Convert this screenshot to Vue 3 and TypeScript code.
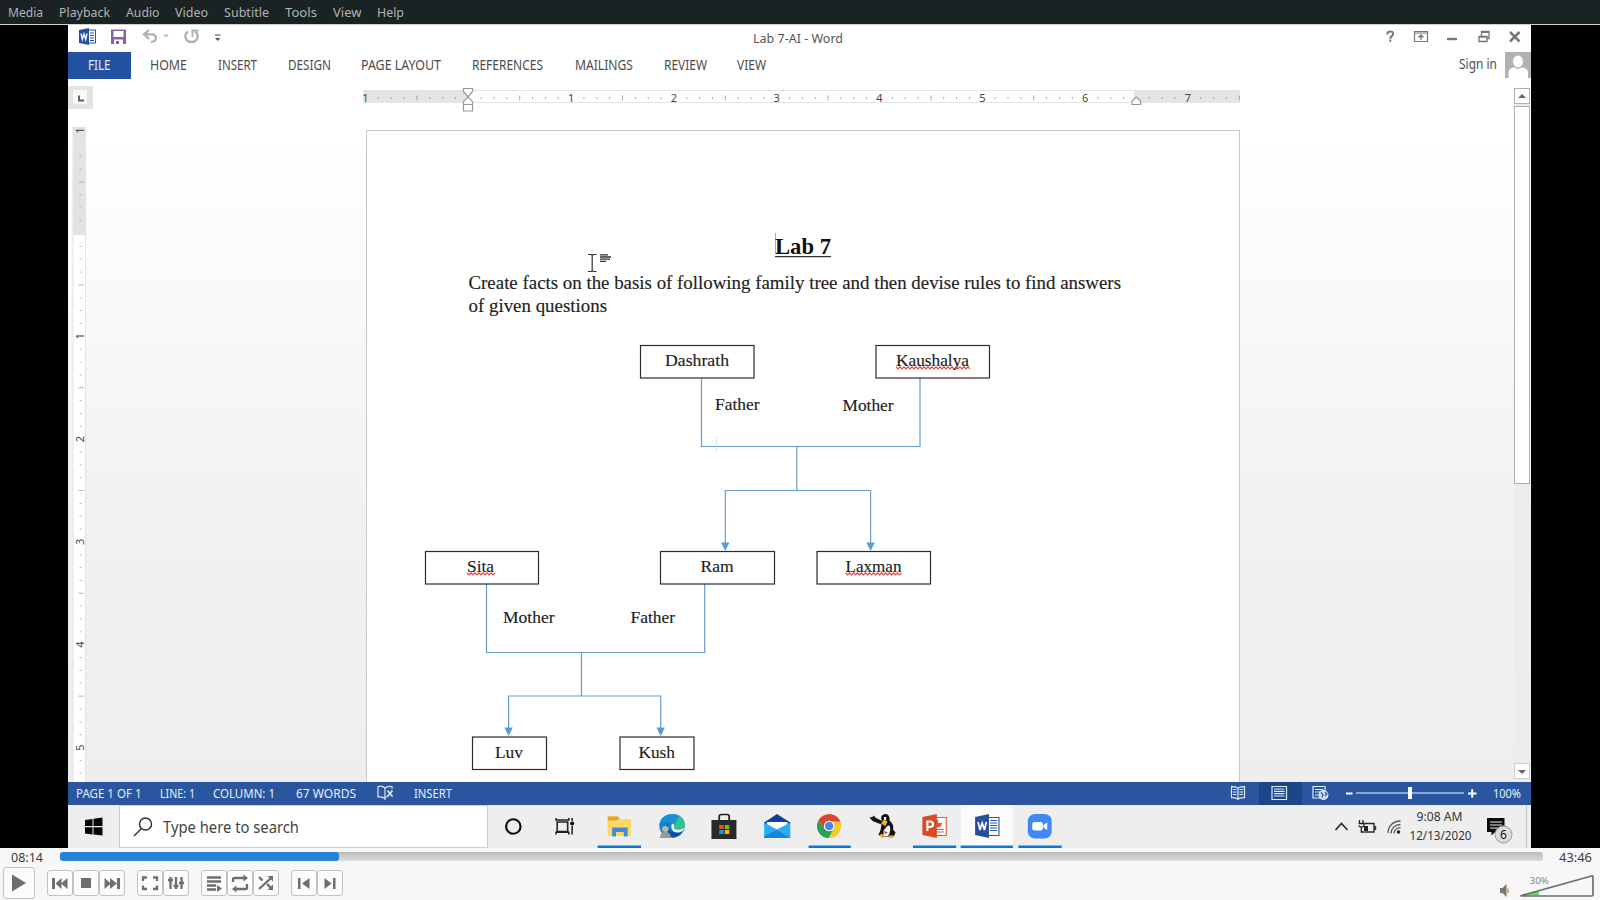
<script setup lang="ts">
import { h, type FunctionalComponent } from 'vue'

interface Label { t: string; w: number; gap: number }

// A line of text fitted to a fixed width, baseline 15px below its top.
const Fit: FunctionalComponent<{ t: string; w: number }> = (props) =>
  h('svg', { width: props.w, height: 20, class: 'fit' }, [
    h('text', { x: 0, y: 15, textLength: props.w, lengthAdjust: 'spacingAndGlyphs', fill: 'currentColor' }, props.t),
  ])
Fit.props = ['t', 'w']

const menus: Label[] = [
  { t: 'Media', w: 35, gap: 8 }, { t: 'Playback', w: 51, gap: 16 }, { t: 'Audio', w: 33.5, gap: 16 },
  { t: 'Video', w: 33, gap: 15.5 }, { t: 'Subtitle', w: 45, gap: 16 }, { t: 'Tools', w: 32, gap: 16 },
  { t: 'View', w: 28.5, gap: 15.5 }, { t: 'Help', w: 27, gap: 16 },
]
const tabs: Label[] = [
  { t: 'HOME', w: 37, gap: 18.5 }, { t: 'INSERT', w: 39, gap: 31 }, { t: 'DESIGN', w: 43, gap: 31 },
  { t: 'PAGE LAYOUT', w: 80, gap: 30.5 }, { t: 'REFERENCES', w: 71, gap: 31 }, { t: 'MAILINGS', w: 58, gap: 31.5 },
  { t: 'REVIEW', w: 43, gap: 31 }, { t: 'VIEW', w: 29, gap: 30.5 },
]
const status: Label[] = [
  { t: 'PAGE 1 OF 1', w: 65.5, gap: 7.5 }, { t: 'LINE: 1', w: 35, gap: 18.5 },
  { t: 'COLUMN: 1', w: 62, gap: 18.5 }, { t: '67 WORDS', w: 60, gap: 21 },
]

const inch = 102.8
const hTicks: { x: number; half: boolean }[] = []
for (let i = -7; i <= 60; i++) {
  if (i % 8 !== 0 && i !== 52) hTicks.push({ x: 468.3 + (i * inch) / 8, half: Math.abs(i % 8) === 4 })
}
const hNumbers = [-1, 1, 2, 3, 4, 5, 6, 7].map((n) => ({ n: Math.abs(n), x: 468.3 + n * inch }))
const vTicks: { y: number; half: boolean }[] = []
for (let i = -6; i <= 42; i++) {
  if (i % 8 !== 0) vTicks.push({ y: 233.5 + (i * inch) / 8, half: Math.abs(i % 8) === 4 })
}
const vNumbers = [-1, 1, 2, 3, 4, 5].map((n) => ({ n: Math.abs(n), y: 233.5 + n * inch }))

const people = [
  { t: 'Dashrath', x: 640.5, y: 345.5, w: 113.5, tx: 665, tw: 64 },
  { t: 'Kaushalya', x: 876, y: 345.5, w: 113.5, tx: 896, tw: 73, bad: true },
  { t: 'Sita', x: 425.5, y: 551.5, w: 113, tx: 467, tw: 27, bad: true },
  { t: 'Ram', x: 660.5, y: 551.5, w: 114, tx: 700.5, tw: 33 },
  { t: 'Laxman', x: 817, y: 551.5, w: 113.5, tx: 845.5, tw: 56, bad: true },
  { t: 'Luv', x: 472.5, y: 737, w: 74, tx: 495, tw: 28 },
  { t: 'Kush', x: 620, y: 737, w: 74, tx: 638.5, tw: 36.5 },
]
const roles = [
  { t: 'Father', x: 715, y: 410, w: 44.5 }, { t: 'Mother', x: 842.5, y: 411, w: 51 },
  { t: 'Mother', x: 503, y: 623, w: 51.5 }, { t: 'Father', x: 630.5, y: 623, w: 44.5 },
]
const squiggle = (x: number, y: number, w: number): string => {
  let d = `M${x} ${y}`
  for (let i = 1; i * 2 <= w; i++) d += `L${x + i * 2} ${y + (i % 2 ? 2 : 0)}`
  return d
}
const arrows = [{ x: 725.3, y: 551 }, { x: 870.6, y: 551 }, { x: 508.6, y: 736 }, { x: 660.7, y: 736 }]

// Control groups: filled and stroked outlines on a 26px grid.
const groups: { f?: string; s?: string }[][] = [
  [
    { f: 'M5 8h3v11H5zM8.500 13.500l6-5.500v11zM14 13.500L20.500 8v11z' },
    { f: 'M8 8h10v10H8z' },
    { f: 'M5.500 8v11l6.500-5.500zM11 8v11l7-5.500zM18 8h3v11h-3z' },
  ],
  [
    { s: 'M6 11V7.500h4M16 7.500h4V11M20 15.500V19h-4M10 19H6v-3.500' },
    { s: 'M7.500 7v12M13 7v12M18.500 7v12M5 10h5M10.500 16h5M16 13h5' },
  ],
  [
    { s: 'M6 7.500h14M6 11.500h14M6 15.500h9M6 19.500h9', f: 'M16 15v7l5-3.500z' },
    { s: 'M6 12V9.500c0-1 .5-1.500 1.500-1.500H18M20 14v3.500c0 1-.5 1.500-1.500 1.500H8', f: 'M16.500 4.500l4.500 3.500-4.500 3.500zM9.500 15.500L5 19l4.500 3.500z' },
    { s: 'M6 7l3.500 3.500M6 19L18 8M14 14l4 4', f: 'M14.500 6h5.500v5.500zM14.500 20H20v-5.500z' },
  ],
  [
    { f: 'M7 8h2.500v11H7zM18.500 8v11l-7.500-5.500z' },
    { f: 'M7.500 8v11l7-5.500zM16 8h2.500v11H16z' },
  ],
]
</script>

<template>
  <div class="player">
    <nav class="menubar">
      <Fit v-for="m in menus" :key="m.t" :t="m.t" :w="m.w" :style="{ marginLeft: m.gap + 'px' }" />
    </nav>

    <main class="video">
      <div class="desktop">
        <header class="titlebar">
          <svg width="150" height="27" viewBox="77 25 150 27">
            <rect x="87" y="30" width="8.500" height="13" fill="#fff" stroke="#2b579a" />
            <path d="M90 33h4M90 35.500h4M90 38h4M90 40.500h4" stroke="#2b579a" />
            <path d="M79 30l10-2v17l-10-2z" fill="#2750a5" />
            <path d="M81 33.500l1.300 6 1.700-5.500 1.700 5.500 1.300-6" fill="none" stroke="#fff" stroke-width="1.300" />
            <path d="M111 29.500h15v14.500h-15z" fill="#8561ad" />
            <path d="M113.500 31h10v6h-10zM114 39.500h9v4.500h-9z" fill="#fff" /><path d="M116 41h3v3h-3z" fill="#8561ad" />
            <path d="M149 30l-5 4.300 5 4.500M144.500 34.300h7c6 0 6 7.500-.5 7.500" fill="none" stroke="#b1b1b1" stroke-width="2.300" />
            <path d="M163 34.500h6l-3 3z" fill="#b9b9b9" />
            <path d="M188 31.500c-4.500 3-3 10.500 3.500 10.500 6.500 0 8-7.500 3.500-10.500" fill="none" stroke="#b1b1b1" stroke-width="2.300" />
            <path d="M192.500 37v-6.500h6" fill="none" stroke="#b1b1b1" stroke-width="2" />
            <path d="M215 35h5.500" stroke="#666" stroke-width="1.200" /><path d="M215 38h5.500l-2.750 3z" fill="#555" />
          </svg>
          <Fit class="doc-name" t="Lab 7-AI - Word" :w="90" />
          <svg class="window-buttons" width="141" height="27" viewBox="1383 25 141 27" fill="none" stroke="#777">
            <path d="M1387.200 34.500c0-4 6-4 6-.8 0 2.600-2.900 2.300-2.900 5M1390.300 39.600v2.200" stroke-width="2" />
            <path d="M1414.500 31.500h13v10h-13zM1414 33h14" stroke-width="1.200" /><path d="M1421 40v-5M1418.500 37.500l2.500-2.500 2.500 2.500" stroke-width="1.300" />
            <path d="M1447 39h10" stroke-width="2.400" />
            <path d="M1479 36.500h8v5h-8zM1481.500 36v-4.500h7.500v7h-2M1479 37h8M1481 32.300h8" stroke-width="1.300" />
            <path d="M1510 32l9.500 9.500M1519.500 32l-9.500 9.500" stroke-width="2.500" />
          </svg>
        </header>

        <div class="tabs">
          <div class="file"><Fit t="FILE" :w="22.5" /></div>
          <Fit v-for="t in tabs" :key="t.t" :t="t.t" :w="t.w" :style="{ marginLeft: t.gap + 'px' }" />
          <Fit class="signin" t="Sign in" :w="38" />
          <svg class="avatar" width="26" height="26">
            <rect width="26" height="26" fill="#b1b1b1" />
            <ellipse cx="13" cy="9.500" rx="5" ry="6" fill="#fff" /><path d="M3.500 26v-5c0-4 3-5.500 6-5.500 2 1.600 5 1.600 7 0 3 0 6.500 1.500 6.500 5.500v5z" fill="#fff" />
          </svg>
        </div>

        <div class="workspace">
          <div class="sheet-area">
            <svg class="ruler" width="1446" height="51" viewBox="68 79 1446 51">
              <rect x="68" y="86" width="25" height="23" fill="#e4e4e4" />
              <rect x="73" y="90" width="14" height="14" fill="#f9f9f9" /><path d="M79 95.500v5h5" fill="none" stroke="#666" stroke-width="2" />
              <rect x="363" y="90" width="877" height="13" fill="#e4e4e4" /><rect x="468" y="91" width="666" height="11" fill="#fff" />
              <path v-for="k in hTicks" :key="k.x" :d="k.half ? `M${k.x} 95.500v5` : `M${k.x} 97v2`" stroke="#a7a7a7" />
              <text v-for="n in hNumbers" :key="n.x" :x="n.x" y="101.500" text-anchor="middle" class="number">{{ n.n }}</text>
              <g fill="#fff" stroke="#999" stroke-width="1.200">
                <path d="M463.500 88.500h9v3l-4.500 5.500-4.500-5.500z" /><path d="M463.500 104.500v-3l4.500-4.500 4.500 4.500v3zM463.500 104.500h9v6.500h-9z" />
                <path d="M1132 104.500v-3.500l4.300-4 4.300 4v3.500z" />
              </g>
            </svg>
            <div class="page-row">
              <svg class="left-ruler" width="298" height="652" viewBox="68 130 298 652">
                <rect x="72.500" y="127" width="13.500" height="655" fill="#e3e3e3" /><rect x="73.500" y="235" width="11.500" height="547" fill="#fff" />
                <path v-for="k in vTicks" :key="k.y" :d="k.half ? `M78.500 ${k.y}h5` : `M79.500 ${k.y}h2`" stroke="#b3b3b3" />
                <text v-for="n in vNumbers" :key="n.y" class="number" text-anchor="middle" :transform="`translate(84 ${n.y}) rotate(-90)`">{{ n.n }}</text>
              </svg>
              <svg class="page" width="874" height="652" viewBox="366 130 874 652">
                <rect x="366.500" y="130.500" width="873" height="660" fill="#fff" stroke="#c8c8c8" />
                <path d="M775.500 233v20" stroke="#aaa" />
                <text x="775" y="253.500" class="heading" textLength="56" lengthAdjust="spacingAndGlyphs">Lab 7</text>
                <path d="M775 256.700h56" stroke="#333" stroke-width="1.200" />
                <text x="468.500" y="289" class="body" textLength="652.500" lengthAdjust="spacingAndGlyphs">Create facts on the basis of following family tree and then devise rules to find answers</text>
                <text x="468.500" y="311.500" class="body" textLength="138.500" lengthAdjust="spacingAndGlyphs">of given questions</text>
                <path d="M588 254.500h3.200l1 1 1-1h3.300M588 271.500h3.200l1-1 1 1h3.300M592.200 255v16" fill="none" stroke="#333" stroke-width="1.200" />
                <path d="M600 254.800h8M600 257h11M600 259.200h10M600 261.400h6" stroke="#333" stroke-width="1.300" />
                <g fill="none" stroke="#6c9bc9" stroke-width="1.200">
                  <path d="M701.500 378v68.500H920V378M796.800 446.500v44M725.300 545v-54.500h145.300V545" />
                  <path d="M486.500 584v68.500h218.200V584M581.500 652.500V696M508.600 730v-34h152.100v34" />
                </g>
                <path d="M716.500 437v15" stroke="#cfe3f4" />
                <path v-for="a in arrows" :key="a.x" :d="`M${a.x - 4.2} ${a.y - 8.5}h8.400l-4.200 8.500z`" fill="#5b9bd5" />
                <g v-for="p in people" :key="p.t">
                  <rect :x="p.x" :y="p.y" :width="p.w" height="32.500" fill="#fff" stroke="#2c2c2c" stroke-width="1.200" />
                  <text :x="p.tx" :y="p.y + 20.5" class="node" :textLength="p.tw" lengthAdjust="spacingAndGlyphs">{{ p.t }}</text>
                  <path v-if="p.bad" :d="squiggle(p.tx, p.y + 21.3, p.tw + 1)" fill="none" stroke="#e8403c" stroke-width="1.200" />
                </g>
                <text v-for="r in roles" :key="r.x" :x="r.x" :y="r.y" class="node" :textLength="r.w" lengthAdjust="spacingAndGlyphs">{{ r.t }}</text>
              </svg>
            </div>
          </div>
          <svg class="scroll" width="17" height="703" viewBox="1514 79 17 703">
            <rect x="1514" y="104" width="16" height="660" fill="#ececec" />
            <g fill="#fff" stroke="#b0b0b0"><rect x="1514.500" y="88.500" width="15" height="15" /><rect x="1514.500" y="106.500" width="15" height="377" /><rect x="1514.500" y="763.500" width="15" height="15" stroke="#cfcfcf" /></g>
            <path d="M1518 98h8l-4-4zM1518 770h8l-4 4z" fill="#666" />
          </svg>
        </div>

        <footer class="statusbar">
          <Fit v-for="s in status" :key="s.t" :t="s.t" :w="s.w" :style="{ marginLeft: s.gap + 'px' }" />
          <svg class="proof" width="17" height="16" fill="none" stroke="#dce8f5" stroke-width="1.200">
            <path d="M8 3C6 1 3 1 1 1.500V12c3-.5 5 0 7 1.500V3c1.500-1.500 4-2 7-1.500V4M8 13.500V15M8 12.500c1-.5 2-1 3-1" /><path d="M10.500 5.500l5 6M15.500 5.500l-5 6" stroke-width="1.800" />
          </svg>
          <Fit t="INSERT" :w="38" class="insert" />
          <svg class="view-tools" width="305" height="23" viewBox="1226 782 305 23" fill="none" stroke="#e1ebf7" stroke-width="1.200">
            <rect x="1259" y="782" width="43" height="23" fill="#1d4689" stroke="none" />
            <path d="M1238 788c-2-1-4-1.300-6.500-1.300v11c2.500 0 4.500.3 6.500 1.300 2-1 4-1.300 6.500-1.300v-11c-2.500 0-4.500.3-6.500 1.300zv12M1233 789.500h3.500M1233 792h3.500M1233 794.500h3.500M1239.500 789.500h3.500M1239.500 792h3.500M1239.500 794.500h3.500" />
            <path d="M1272 786.500h14.500v13H1272zM1274 789h10.500M1274 791.300h10.500M1274 793.600h10.500M1274 796h10.500" />
            <path d="M1320 798h-7v-11.500h12v4M1315 789.500h8M1315 792h5M1315 795h4" /><circle cx="1323.500" cy="795" r="4.300" fill="#cddff2" /><path d="M1321 792.500l2 2-1 3M1325 792l2 2-2 2" stroke="#2b579a" />
            <path d="M1346 793.500h6.500M1468 793.500h8.500M1472.200 789.300v8.500" stroke-width="2" stroke="#fff" /><path d="M1356 793h108" stroke="#a9c0dd" stroke-width="1.400" />
            <path d="M1408 787h4v12h-4z" fill="#fff" stroke="none" />
            <text class="percent" x="1493" y="797.500" textLength="28" lengthAdjust="spacingAndGlyphs">100%</text>
          </svg>
        </footer>

        <div class="taskbar">
          <svg class="start" width="51" height="43" viewBox="68 805 51 43"><path d="M85 820l7.500-1v7H85zM93.500 818.800l9-1.300v8.500h-9zM85 827.200h7.500v7.300l-7.500-1zM93.500 827.200h9v8.300l-9-1z" fill="#050505" /></svg>
          <div class="search">
            <svg width="20" height="20" fill="none" stroke="#333" stroke-width="1.500"><circle cx="12.500" cy="7" r="6" /><path d="M8.500 11.500L1 19" /></svg>
            <Fit class="hint" t="Type here to search" :w="136" />
          </div>
          <svg class="apps" width="600" height="43" viewBox="489.200 805 540.500 43" preserveAspectRatio="none">
            <ellipse cx="512" cy="826.500" rx="6.500" ry="7.300" fill="none" stroke="#111" stroke-width="2" />
            <g fill="none" stroke="#222" stroke-width="1.400"><path d="M551.500 822h9.500v9.500h-9.500zM550.500 818v2h11.500v-2M550.500 834.500v-2.200h11.500v2.200M565 818v3M565 826v8.500" /></g><circle cx="565" cy="823.500" r="1.900" fill="#111" />
            <rect x="915" y="805" width="47" height="41" fill="#fbfbfb" />
            <path d="M588 845.500h39v2.500h-39zM778 845.500h38v2.500h-38zM872 845.500h39v2.500h-39zM915 845.500h47v2.500h-47zM967 845.500h39v2.500h-39z" fill="#0a78d4" />

            <path d="M597 816.500h9l2 2.500h10v17h-21z" fill="#ffd766" /><path d="M597 816.500h9l2 2-3 2h-8z" fill="#e4a32b" />
            <path d="M601 836.500v-9h14v9h-3.500V832h-7v4.500z" fill="#3a8fd4" />

            <circle cx="655" cy="826" r="11.500" fill="#1684cf" />
            <path d="M643.600 825c1-8 7-11.500 12.500-11 6.500.5 10.500 5 10.500 10 0 4-3 6-7 6-3.500 0-4.500-1-3-2.500 3-5-3-8.500-7.500-6.500-2.500.8-4.500 2-5.500 4z" fill="#35c08d" />
            <path d="M643.600 825c1-8 7-11.500 12.500-11 2 .2 4 1 5.500 2-3 3-1 7-6 8-3-4-8-3-12 1z" fill="#1a8fd6" />
            <path d="M651 823c0 8 6 11.500 13 8.500-1.500 4-5 6-9 6-5-1-7-8-4-14.500z" fill="#0d4fa3" /><path d="M655 823.500c3 1 2 3 1.500 4.500 2 3 7 2 9.500-.5-.5 3-3 5-6 5-4 0-7-4-5-9z" fill="#eef6fa" />
            <circle cx="649" cy="829" r="3" fill="#b5b5b5" /><path d="M644 838c0-4 2-6 5-6s5 2 5 6z" fill="#999" />

            <path d="M697.500 820v-3.500c0-1 .8-2 2-2h5c1.200 0 2 1 2 2v3.500" fill="none" stroke="#222" stroke-width="1.600" /><path d="M690.500 820h22.500v19h-22.500z" fill="#2a2a2a" />
            <path d="M697.500 825h4v4h-4z" fill="#f25022" /><path d="M702.500 825h4v4h-4z" fill="#7fba00" /><path d="M697.500 830h4v4h-4z" fill="#00a4ef" /><path d="M702.500 830h4v4h-4z" fill="#ffb900" />

            <path d="M738 822.500l11.500-8.500 12 8.500v2h-23.500z" fill="#123f9c" /><path d="M740.500 822h18.500v9h-18.500z" fill="#fff" /><path d="M738 822.500l11.500 7 12-7v15.500h-23.500z" fill="#2aaef2" /><path d="M738 838v-2l11.500-6 12 8z" fill="#1686e0" />

            <ellipse cx="796.500" cy="826" rx="10.800" ry="12" fill="#f7c62f" /><path d="M787 820.500c4-8.500 16-8.500 19.500 1H796.500l-4.800 7.300z" fill="#dc4437" /><path d="M787 820.500c-4 8 1 17 9 17.500l4-8.500-8.300-.7z" fill="#23a15b" /><ellipse cx="796.500" cy="826" rx="4.800" ry="5.300" fill="#fff" /><ellipse cx="796.500" cy="826" rx="3.800" ry="4.300" fill="#4a86ee" />

            <g transform="translate(49.550 0) scale(.9009 1)">
              <path d="M869.500 817.500l3-.5 1-1.500 2.500 2.500 6 3c-2-4 0-7 3.500-7 3 0 4.500 3 4 6.500 3 2.500 4.500 6 3.500 9l2.500 3-1.500 4h-12l-3.500-1.500 2-5 1-5.500-9-3.500z" fill="#111" />
              <path d="M883.500 831c2-4 4.500-6 6-5.500 1.500 3 .5 8-1.500 10.500h-4.500z" fill="#f5f5f5" /><path d="M884 817h2.200v3H884z" fill="#fff" />
              <path d="M881 823.500l3-4 3.500 2-2 4.500zM879 835.500l3-2 2 3-1.500 2zM889 835.500h5l-1 2.500h-4z" fill="#f4b323" /><path d="M884 831l4 1.500-3 1.500z" fill="#d8432f" />
            </g>

            <path d="M889 817.500h13v18h-13z" fill="#fff" stroke="#e0593a" /><path d="M894 820a3.500 3.500 0 1 0 3.500 3.500H894zM892 829.500h8M892 832h8" fill="#e0593a" stroke="#e0593a" stroke-width="1.200" /><path d="M880.500 817l13-3v24l-13-3z" fill="#d84b27" />
            <path d="M885 831v-9.500h2.300c3.700 0 3.700 5.500 0 5.500H885" fill="none" stroke="#fff" stroke-width="1.900" />

            <path d="M937 817.500h12.500v18H937z" fill="#fff" stroke="#2b579a" /><path d="M941.500 820.500h6.500M941.500 823h6.500M941.500 825.500h6.500M941.500 828h6.500M941.500 830.500h6.500" stroke="#2b579a" stroke-width="1.200" /><path d="M928 817l12.500-3v24l-12.500-3z" fill="#28509a" />
            <path d="M930.700 822l1.700 8 2-7 2 7 1.700-8" fill="none" stroke="#fff" stroke-width="1.500" />

            <rect x="975.500" y="814" width="21.500" height="24.500" rx="6.500" fill="#4087f7" /><rect x="979.500" y="822" width="9.500" height="8.500" rx="1.800" fill="#fff" /><path d="M989.500 825l3.500-2.500v7.500l-3.500-2.500z" fill="#fff" />
          </svg>
          <svg class="tray" width="204" height="43" viewBox="1327 805 204 43">
            <g fill="none" stroke="#2b2b2b" stroke-width="1.700"><path d="M1335.500 830l6-6.500 6 6.500" /><path d="M1364.500 823.500h9.500v8.500h-9.500M1375.500 826v4" stroke-width="1.400" /></g>
            <path d="M1364 826h4v5h-4z" fill="#222" /><path d="M1359.500 820v3M1363 820v3M1358.500 823.500h5.500v2c0 2-5 2-5 0M1361.300 827v5h3" fill="none" stroke="#222" stroke-width="1.300" />
            <g fill="none" stroke="#555" stroke-width="1.300"><path d="M1388 833c0-6.500 5-12 12.500-12M1391 833.500c0-5 4-9 9.500-9M1394 833.500c0-3.300 2.800-5.800 6.500-5.800" /></g><circle cx="1398.500" cy="832" r="1.800" fill="#222" />
            <text x="1416.500" y="821" textLength="46" lengthAdjust="spacingAndGlyphs">9:08 AM</text><text x="1409.500" y="840" textLength="62" lengthAdjust="spacingAndGlyphs">12/13/2020</text>
            <path d="M1487 818h17.500v14H1495l-3.500 3.500V832h-4.500z" fill="#0c0c0c" /><path d="M1490 822h12M1490 825h12M1490 828h8" stroke="#eee" stroke-width="1.100" />
            <circle cx="1503.500" cy="834.500" r="8.500" fill="#dcdcdc" stroke="#999" /><text x="1500" y="839" class="badge">6</text>
            <path d="M1526.500 805v43" stroke="#c3c9c7" />
          </svg>
        </div>
      </div>
    </main>

    <section class="controls">
      <div class="seek-row">
        <Fit t="08:14" :w="32" />
        <div class="seek"><div class="played"></div></div>
        <Fit t="43:46" :w="33" />
      </div>
      <div class="buttons">
        <button class="play"><svg width="30" height="30"><path d="M8 6.500v17L22 15z" fill="#6e6e6e" /></svg></button>
        <div v-for="(g, gi) in groups" :key="gi" class="group">
          <button v-for="(b, bi) in g" :key="bi">
            <svg width="26" height="26"><path v-if="b.s" :d="b.s" fill="none" stroke="#6e6e6e" stroke-width="2.300" /><path v-if="b.f" :d="b.f" fill="#6e6e6e" /></svg>
          </button>
        </div>
        <svg class="speaker" width="22" height="30" viewBox="1497 870 22 30">
          <path d="M1500 888h2.500l4-4v13l-4-4h-2.500z" fill="#777" /><path d="M1507.500 888.500c1 1.500 1 3 0 4.500" fill="none" stroke="#f39a32" stroke-width="1.500" />
        </svg>
        <svg class="wedge" width="76" height="28" viewBox="1519 872 76 28">
          <path d="M1522 895.500l17-4.700v4.700z" fill="#6fd27a" /><path d="M1521.500 895.500l70-19.500c1-.3 1.500 0 1.500 1v17.500c0 1-.5 1.500-1.500 1.500h-69.500c-1.300 0-1.300-.3-.5-.5z" fill="none" stroke="#6f6f6f" stroke-width="1.700" />
          <text x="1529.500" y="884" textLength="19.500" lengthAdjust="spacingAndGlyphs">30%</text>
        </svg>
      </div>
    </section>
  </div>
</template>

<style>
body { margin: 0; }
</style>

<style scoped>
.player { width: 1600px; height: 900px; display: flex; flex-direction: column; overflow: hidden; background: #f7f7f7; font-family: "Noto Sans", "Open Sans", sans-serif; }
svg { display: block; flex: none; }
.fit { overflow: visible; }
.menubar { height: 24px; flex: none; display: flex; padding-top: 2px; box-sizing: border-box; background: #1b2224; color: #afb4b5; font-size: 13px; }
.video { height: 824px; flex: none; background: #000; border-top: 1px solid #d0d0d0; box-sizing: border-box; display: flex; padding-left: 68px; }
.desktop { width: 1463px; display: flex; flex-direction: column; background: #fff; }
.titlebar { height: 27px; flex: none; display: flex; padding-left: 9px; color: #555; font-size: 13px; }
.doc-name { margin: 3px 0 0 526px; }
.window-buttons { margin-left: 540px; }
.tabs { height: 27px; flex: none; display: flex; align-items: flex-start; color: #4c4c4c; font-size: 14px; }
.tabs > .fit { margin-top: 3px; }
.file { width: 63px; height: 27px; box-sizing: border-box; padding: 3px 0 0 20px; background: #2450a0; color: #e4ecf8; }
.tabs > .signin { margin-left: auto; margin-top: 2px; font-size: 13.5px; }
.avatar { margin-left: 8px; }
.workspace { height: 703px; flex: none; display: flex; background: linear-gradient(#fff 0, #fff 60px, #f1f1f1 450px, #eeeeee 100%); }
.sheet-area { width: 1446px; flex: none; }
.ruler { background: #fff; }
.page-row { display: flex; }
.left-ruler { overflow: visible; }
.number { font-family: "Noto Sans", sans-serif; font-size: 11px; fill: #444; }
.page { font-family: "Liberation Serif", serif; }
.heading { font-size: 24px; font-weight: bold; fill: #111; }
.body { font-size: 18px; fill: #222; stroke: #222; stroke-width: .15px; }
.node { font-size: 17px; fill: #1c1c1c; stroke: #1c1c1c; stroke-width: .15px; }
.statusbar { height: 23px; flex: none; display: flex; background: #29569e; color: #e6eefa; font-size: 12.5px; }
.statusbar > .fit { margin-top: 1px; }
.proof { margin: 3px 0 0 21px; }
.insert { margin-left: 20px; }
.view-tools { margin-left: auto; }
.percent { font-size: 12.5px; fill: #e6eefa; stroke: none; }
.taskbar { height: 43px; flex: none; display: flex; background: #eee; }
.search { width: 369px; box-sizing: border-box; display: flex; background: #fff; border: 1px solid #ccc; padding: 11px 0 0 13px; }
.hint { margin: 1px 0 0 10px; font-size: 17px; color: #444; }
.tray { margin-left: auto; font-size: 12.5px; fill: #333; }
.badge { font-size: 12px; fill: #111; }
.controls { flex: 1; background: #f7f7f7; color: #3c3c3c; font-size: 13px; }
.seek-row { height: 18px; display: flex; align-items: flex-start; padding-left: 11px; }
.seek-row .fit { margin-top: -1px; }
.seek { width: 1483px; flex: none; height: 9px; margin: 4px 16px 0 17px; border-radius: 3px; background: linear-gradient(#bcbcbc, #dcdcdc); }
.played { width: 279px; height: 9px; border-radius: 3px; background: #2a82d3; }
.buttons { display: flex; padding-left: 3px; height: 34px; align-items: flex-start; }
.buttons button { width: 26px; height: 26px; margin: 0; padding: 0; box-sizing: border-box; background: #fcfcfc; border: 1px solid #c2c2c2; border-radius: 3px; display: flex; align-items: center; justify-content: center; }
.buttons .play { width: 32px; height: 32px; margin-top: 1px; }
.group { display: flex; margin: 4px 0 0 12px; }
.speaker { margin: 4px 0 0 auto; }
.wedge { margin: 6px 5px 0 0; }
.wedge text { font-size: 9.5px; fill: #888; }
</style>
